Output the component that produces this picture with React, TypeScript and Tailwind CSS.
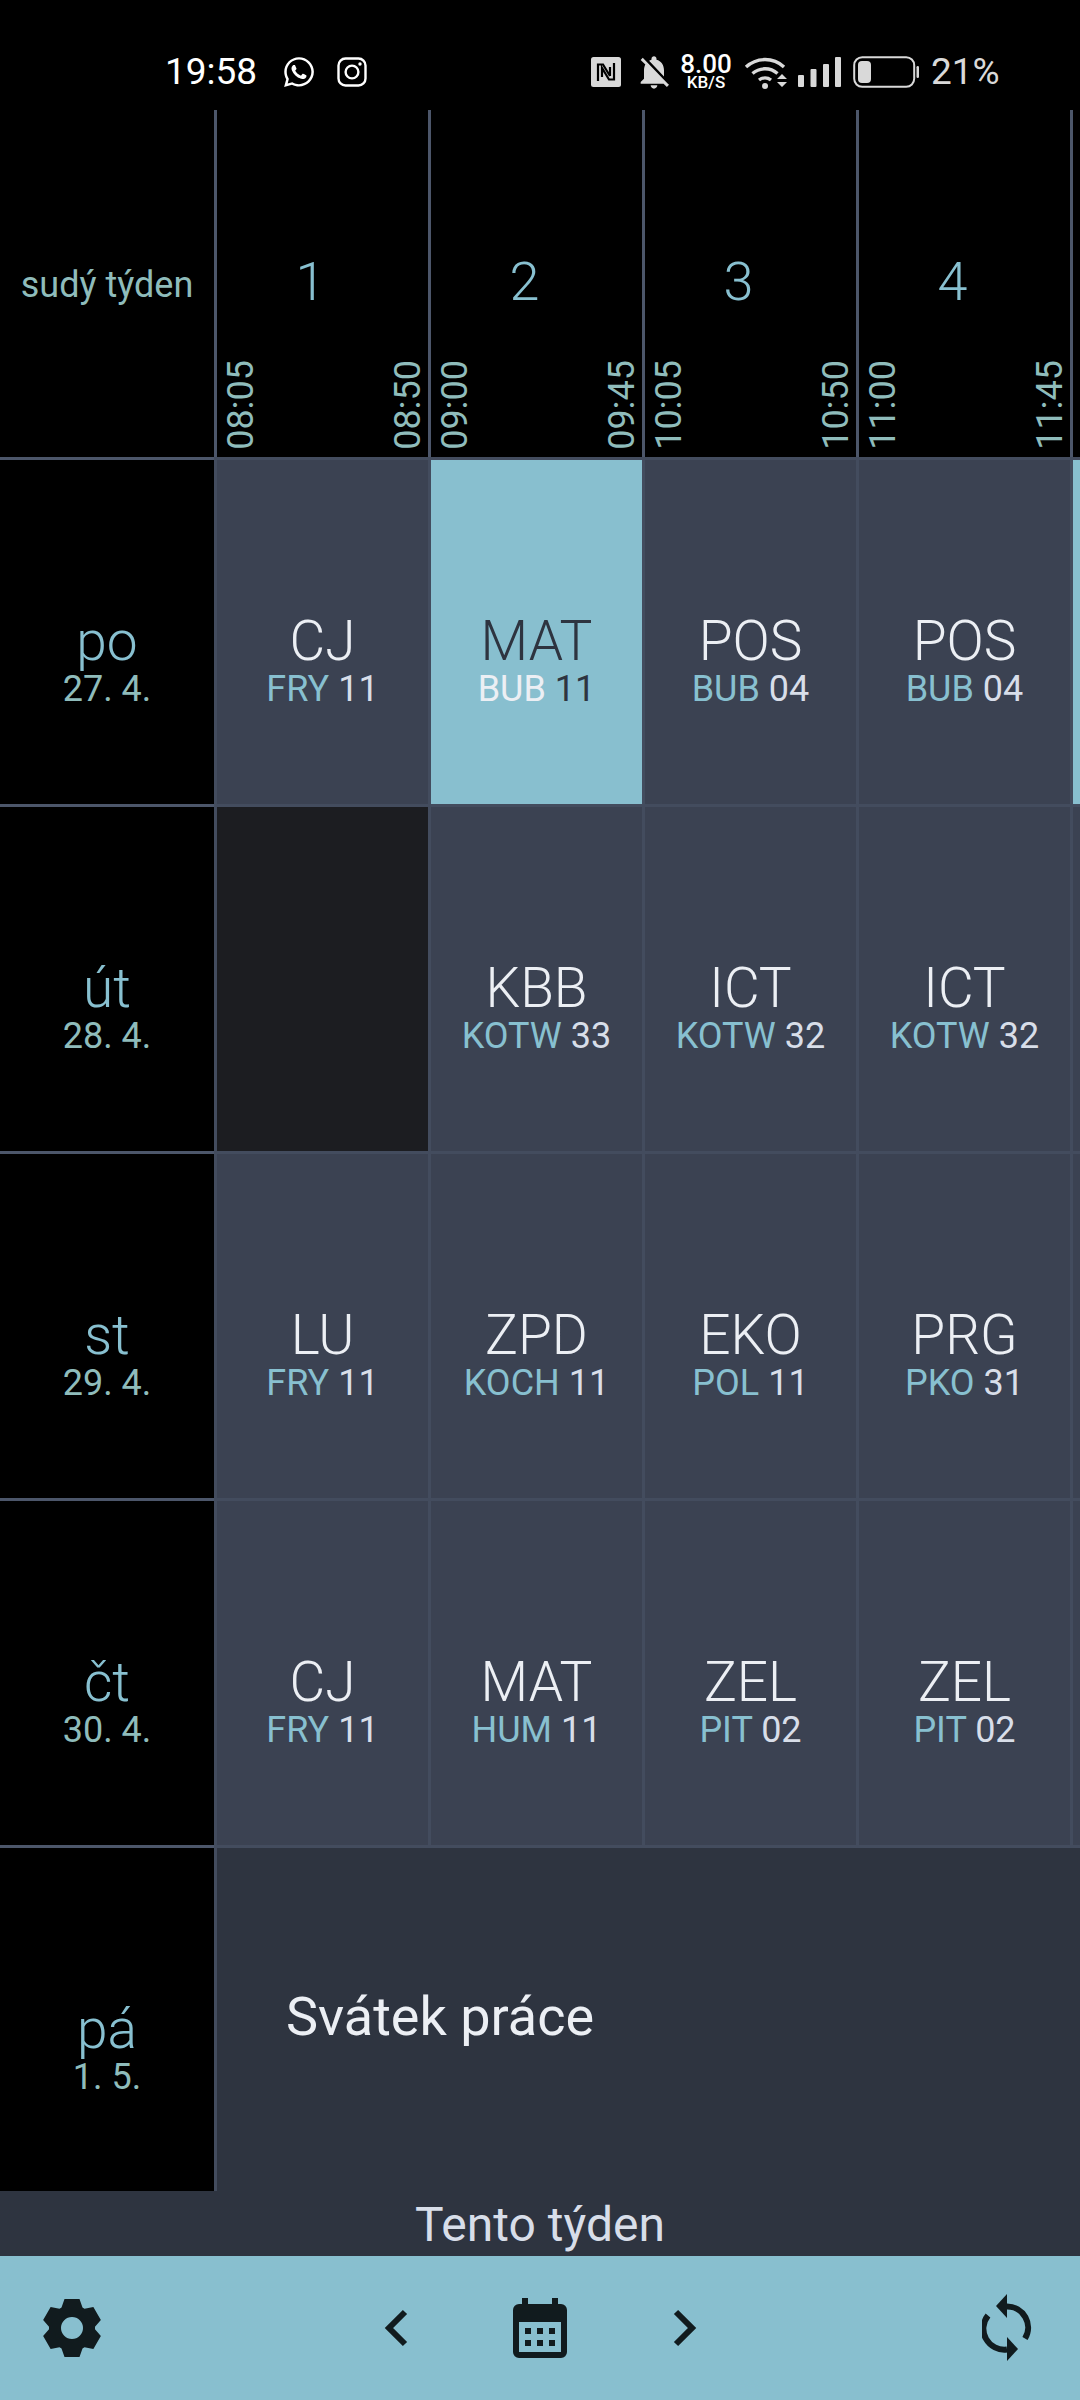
import React from "react";
import { FaWhatsapp } from "react-icons/fa";
import { MdNotificationsOff } from "react-icons/md";

type Cell = { s: string; t: string; r: string; active?: boolean } | null;

const days: { name: string; date: string; cells: Cell[] }[] = [
  {
    name: "po",
    date: "27. 4.",
    cells: [
      { s: "CJ", t: "FRY", r: "11" },
      { s: "MAT", t: "BUB", r: "11", active: true },
      { s: "POS", t: "BUB", r: "04" },
      { s: "POS", t: "BUB", r: "04" },
    ],
  },
  {
    name: "út",
    date: "28. 4.",
    cells: [
      null,
      { s: "KBB", t: "KOTW", r: "33" },
      { s: "ICT", t: "KOTW", r: "32" },
      { s: "ICT", t: "KOTW", r: "32" },
    ],
  },
  {
    name: "st",
    date: "29. 4.",
    cells: [
      { s: "LU", t: "FRY", r: "11" },
      { s: "ZPD", t: "KOCH", r: "11" },
      { s: "EKO", t: "POL", r: "11" },
      { s: "PRG", t: "PKO", r: "31" },
    ],
  },
  {
    name: "čt",
    date: "30. 4.",
    cells: [
      { s: "CJ", t: "FRY", r: "11" },
      { s: "MAT", t: "HUM", r: "11" },
      { s: "ZEL", t: "PIT", r: "02" },
      { s: "ZEL", t: "PIT", r: "02" },
    ],
  },
];

const periods = [
  { n: "1", a: "08:05", b: "08:50" },
  { n: "2", a: "09:00", b: "09:45" },
  { n: "3", a: "10:05", b: "10:50" },
  { n: "4", a: "11:00", b: "11:45" },
];

function gearPath() {
  const c = 30;
  const pts: string[] = [];
  for (let i = 0; i < 6; i++) {
    const a = ((-90 + i * 60) * Math.PI) / 180;
    const ux = Math.cos(a);
    const uy = Math.sin(a);
    const vx = -uy;
    const vy = ux;
    const p = (r: number, w: number) => `${(c + ux * r + vx * w).toFixed(2)} ${(c + uy * r + vy * w).toFixed(2)}`;
    pts.push(p(20.5, -10.5), p(29, -7.5), p(29, 7.5), p(20.5, 10.5));
  }
  return `M${pts.join("L")}Z M41 30a11 11 0 1 0 -22 0a11 11 0 1 0 22 0Z`;
}

function Gear() {
  return (
    <svg width="60" height="60" viewBox="0 0 60 60" className="ml-[42px] shrink-0">
      <path d={gearPath()} fill="#111b1e" fillRule="evenodd" />
    </svg>
  );
}

function Calendar() {
  return (
    <svg width="54" height="60" viewBox="0 0 54 60" className="ml-[105px] shrink-0">
      <path
        fillRule="evenodd"
        fill="#111b1e"
        d="M9 0h6v6h24V0h6v6h3a6 6 0 0 1 6 6v42a6 6 0 0 1-6 6H6a6 6 0 0 1-6-6V12a6 6 0 0 1 6-6h3ZM6 24v30h42V24Z"
      />
      <path
        fill="#111b1e"
        d="M12 30h6v6h-6ZM24 30h6v6h-6ZM36 30h6v6h-6ZM12 42h6v6h-6ZM24 42h6v6h-6ZM36 42h6v6h-6Z"
      />
    </svg>
  );
}

function Chevron({ right, className }: { right?: boolean; className: string }) {
  return (
    <svg width="24" height="38" viewBox="0 0 24 38" className={className}>
      <path
        d={right ? "M3 3 L19 19 L3 35" : "M21 3 L5 19 L21 35"}
        fill="none"
        stroke="#111b1e"
        strokeWidth="6"
      />
    </svg>
  );
}

function SyncIcon() {
  return (
    <svg width="50" height="68" viewBox="0 0 50 68" className="ml-[285px] shrink-0">
      <g fill="none" stroke="#111b1e" strokeWidth="6">
        <path d="M25 12.5 A21 21 0 0 1 43 44.5" />
        <path d="M25 55.5 A21 21 0 0 1 6 21.5" />
      </g>
      <path d="M14 12 L25 0 V24 Z" fill="#111b1e" />
      <path d="M36 55 L25 43 V67 Z" fill="#111b1e" />
    </svg>
  );
}

function Instagram() {
  return (
    <svg width="30" height="30" viewBox="0 0 30 30" className="ml-[21px] shrink-0">
      <rect x="1.5" y="1.5" width="27" height="27" rx="7" fill="none" stroke="#fff" strokeWidth="2.4" />
      <circle cx="15" cy="15" r="6.4" fill="none" stroke="#fff" strokeWidth="2.4" />
      <circle cx="23" cy="7" r="1.7" fill="#fff" />
    </svg>
  );
}

function Nfc() {
  return (
    <svg width="30" height="30" viewBox="0 0 30 30" className="ml-[224px] shrink-0">
      <rect width="30" height="30" rx="2.5" fill="#d9d9d9" />
      <path
        d="M7 24 V7.5 H12 L19 19 M23 6 V22.5 H18 L11 11 V20 M19 19 V10"
        fill="none"
        stroke="#000"
        strokeWidth="2.2"
      />
    </svg>
  );
}

function Wifi() {
  return (
    <svg width="44" height="33" viewBox="0 0 44 33" className="ml-[10px] shrink-0">
      <g fill="none" stroke="#d9d9d9" strokeWidth="3.4">
        <path d="M2 11 A28 28 0 0 1 40 11" />
        <path d="M8.5 17.5 A19 19 0 0 1 33.5 17.5" />
        <path d="M15 24 A10 10 0 0 1 27 24" />
      </g>
      <circle cx="21" cy="30" r="3" fill="#d9d9d9" />
      <path d="M33 23 L38 18 L43 23 Z M33 26 L43 26 L38 31 Z" fill="#d9d9d9" />
    </svg>
  );
}

function Signal() {
  return (
    <svg width="43" height="30" viewBox="0 0 43 30" className="ml-[10px] shrink-0">
      <rect x="0" y="18" width="6" height="12" rx="1" fill="#d9d9d9" />
      <rect x="12.5" y="12" width="6" height="18" rx="1" fill="#d9d9d9" />
      <rect x="25" y="7" width="6" height="23" rx="1" fill="#d9d9d9" />
      <rect x="37" y="0" width="6" height="30" rx="1" fill="#d9d9d9" />
    </svg>
  );
}

function Battery() {
  return (
    <svg width="66" height="32" viewBox="0 0 66 32" className="ml-[12px] shrink-0">
      <rect x="1.2" y="1.2" width="60" height="29.6" rx="8" fill="none" stroke="#d9d9d9" strokeWidth="2" />
      <rect x="5" y="5" width="13" height="22" rx="4" fill="#d9d9d9" />
      <rect x="63.5" y="10" width="2.5" height="12" rx="1.2" fill="#d9d9d9" />
    </svg>
  );
}

function VerticalTime({ children }: { children: React.ReactNode }) {
  return (
    <span className="[writing-mode:vertical-rl] rotate-180 text-[36px] leading-[40px] text-[#8fbcbb]">
      {children}
    </span>
  );
}

function Lesson({ cell }: { cell: Cell }) {
  if (!cell) {
    return <div className="w-[214px] shrink-0 border-l-[3px] border-[#434c5e] bg-[#1c1d21]" />;
  }
  const active = cell.active;
  return (
    <div
      className={`w-[214px] shrink-0 border-l-[3px] border-[#434c5e] flex flex-col items-center pt-[153px] ${
        active ? "bg-[#88bfcf]" : "bg-[#3b4252]"
      }`}
    >
      <span className={`text-[55px] leading-[56px] font-light ${active ? "text-[#2e3440]" : "text-[#eceff4]"}`}>
        {cell.s}
      </span>
      <span className="text-[36px] leading-[40px] whitespace-nowrap">
        <span className={active ? "text-[#eceff4]" : "text-[#88c0d0]"}>{cell.t}</span>{" "}
        <span className={active ? "text-[#2e3440]" : "text-[#d8dee9]"}>{cell.r}</span>
      </span>
    </div>
  );
}

function DayLabel({ name, date }: { name: string; date: string }) {
  return (
    <div className="w-[214px] shrink-0 bg-black flex flex-col items-center pt-[153px]">
      <span className="text-[55px] leading-[56px] font-light text-[#88c0d0]">{name}</span>
      <span className="text-[36px] leading-[40px] text-[#8fbcbb] whitespace-pre">{date}</span>
    </div>
  );
}

export default function App() {
  return (
    <div className="w-[1080px] h-[2400px] bg-[#2e3440] flex flex-col overflow-hidden font-['Roboto',sans-serif]">
      {/* status bar */}
      <div className="h-[110px] shrink-0 bg-black flex items-start pt-[55px] pl-[165px]">
        <div className="flex items-center h-[34px]">
          <span className="text-[37px] leading-[34px] text-white w-[95px]">19:58</span>
          <FaWhatsapp className="ml-[22px] shrink-0 text-white" size={34} />
          <Instagram />
          <Nfc />
          <MdNotificationsOff className="ml-[13px] shrink-0 text-[#d9d9d9]" size={40} />
          <div className="ml-[5px] w-[54px] flex flex-col items-center text-white">
            <div className="text-[26px] leading-[21px] font-medium">8.00</div>
            <div className="text-[17px] leading-[15px] font-medium">KB/S</div>
          </div>
          <div className="w-[1px] shrink-0" />
          <Wifi />
          <Signal />
          <Battery />
          <span className="ml-[12px] text-[37px] leading-[34px] text-[#d9d9d9] whitespace-nowrap">21%</span>
        </div>
      </div>

      {/* header */}
      <div className="h-[347px] shrink-0 bg-black flex">
        <div className="w-[214px] shrink-0 flex items-center justify-center pt-[6px] pb-[4px]">
          <span className="text-[36px] leading-[40px] text-[#8fbcbb] whitespace-nowrap">sudý týden</span>
        </div>
        {periods.map((p) => (
          <div key={p.n} className="w-[214px] shrink-0 border-l-[3px] border-[#4c566a] flex flex-col">
            <div className="h-[250px] shrink-0 flex items-end justify-center pb-[48px]">
              <span className="text-[54px] leading-[60px] font-light text-[#88c0d0] -translate-x-[12px]">{p.n}</span>
            </div>
            <div className="flex justify-between pl-[4px]">
              <VerticalTime>{p.a}</VerticalTime>
              <VerticalTime>{p.b}</VerticalTime>
            </div>
          </div>
        ))}
        <div className="w-[10px] shrink-0 border-l-[3px] border-[#4c566a]" />
      </div>

      {/* timetable rows */}
      {days.map((d, i) => (
        <div key={d.name} className="h-[347px] shrink-0 flex flex-col">
          <div className="h-[3px] shrink-0 bg-[#434c5e] flex">
            <div className="w-[214px] shrink-0 bg-[#4c566a]" />
          </div>
          <div className="flex-1 flex min-h-0">
            <DayLabel name={d.name} date={d.date} />
            {d.cells.map((c, j) => (
              <Lesson key={j} cell={c} />
            ))}
            <div
              className={`flex-1 border-l-[3px] border-[#434c5e] ${i === 0 ? "bg-[#88bfcf]" : "bg-[#3b4252]"}`}
            />
          </div>
        </div>
      ))}

      {/* holiday row */}
      <div className="h-[346px] shrink-0 flex flex-col">
        <div className="h-[3px] shrink-0 bg-[#434c5e] flex">
          <div className="w-[214px] shrink-0 bg-[#4c566a]" />
        </div>
        <div className="flex-1 flex min-h-0">
          <DayLabel name="pá" date="1. 5." />
          <div className="flex-1 border-l-[3px] border-[#434c5e] pl-[69px] pt-[139px]">
            <span className="block text-[54px] leading-[60px] text-[#eceff4]">Svátek práce</span>
          </div>
        </div>
      </div>

      {/* week label */}
      <div className="h-[65px] shrink-0 flex items-center justify-center pt-[2px]">
        <span className="text-[48px] leading-[60px] text-[#d8dee9]">Tento týden</span>
      </div>

      {/* bottom bar */}
      <div className="flex-1 bg-[#88bfcf] flex items-center">
        <Gear />
        <Chevron className="ml-[282px] shrink-0" />
        <Calendar />
        <Chevron right className="ml-[106px] shrink-0" />
        <SyncIcon />
      </div>
    </div>
  );
}
